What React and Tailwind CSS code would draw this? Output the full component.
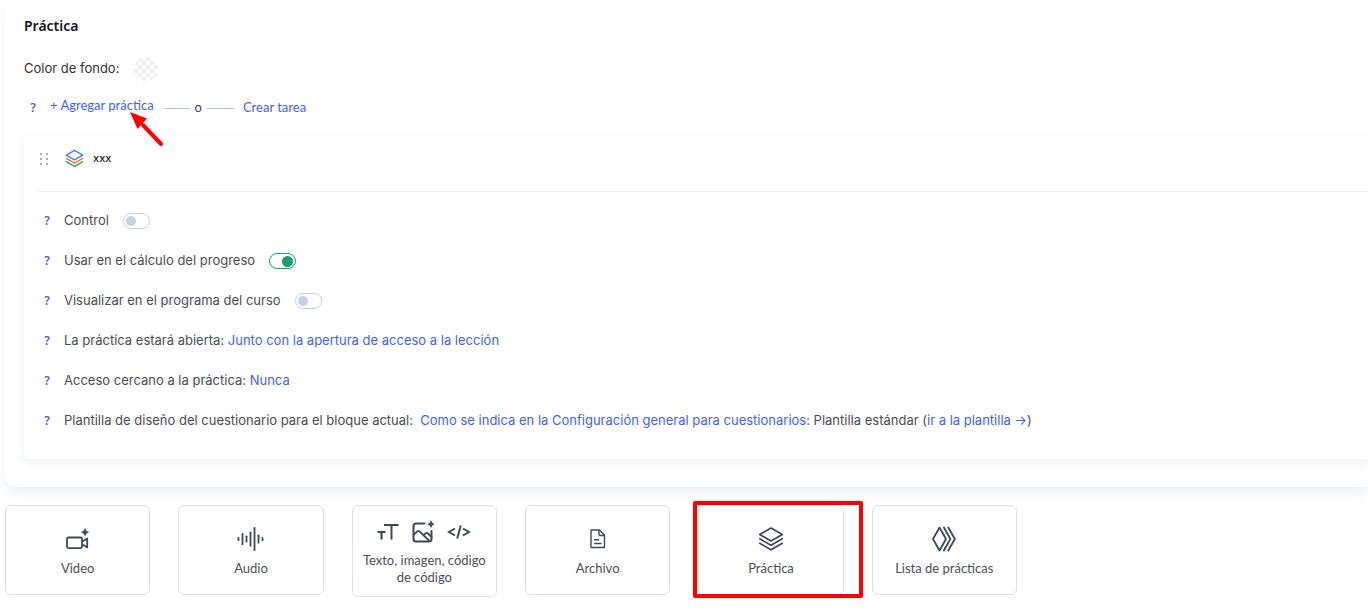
import { useState } from 'react'

const linkClass = 'text-[#3f5fff] hover:underline'

function Hint() {
    return (
        <button type="button" aria-label="Ayuda" className="w-[6px] shrink-0 font-['Noto_Sans',sans-serif] text-xs font-semibold text-[#3f63f5]">
            ?
        </button>
    )
}

function Toggle({ id, label, defaultChecked = false }) {
    const [checked, setChecked] = useState(defaultChecked)

    return (
        <div className="flex h-10 items-center">
            <Hint />
            <label htmlFor={id} className="ml-[14px]">{label}</label>
            <input
                id={id}
                type="checkbox"
                checked={checked}
                onChange={(e) => setChecked(e.target.checked)}
                className="ml-[14px] flex h-4 w-[27px] cursor-pointer appearance-none items-center rounded-full border border-[#c5d0e3] px-[2px] before:size-[10px] before:rounded-full before:bg-[#c5d0e3] checked:justify-end checked:border-[#17a06c] checked:before:size-[11px] checked:before:bg-[#17a06c]"
            />
        </div>
    )
}

function Row({ children }) {
    return (
        <div className="flex h-10 items-center">
            <Hint />
            <p className="ml-[14px] whitespace-pre">{children}</p>
        </div>
    )
}

function DragHandle() {
    return (
        <svg width="10" height="14" viewBox="0 0 10 14" fill="#a3a9b6">
            {[2, 7, 12].map((y) => (
                <g key={y}>
                    <rect x="1" y={y - 1} width="2" height="2" rx="0.5" />
                    <rect x="7" y={y - 1} width="2" height="2" rx="0.5" />
                </g>
            ))}
        </svg>
    )
}

function LayersIcon({ size = 26, top = '#3f4859', middle = '#3f4859', bottom = '#3f4859', width = 1.7 }) {
    return (
        <svg width={size} height={size} viewBox="0 0 26 26" fill="none" strokeWidth={width} strokeLinejoin="round" strokeLinecap="round">
            <path d="M13 2 L24.3 8.5 L13 15 L1.7 8.5 Z" stroke={top} />
            <path d="M1.7 12.8 L13 19.3 L24.3 12.8" stroke={middle} />
            <path d="M1.7 17.3 L13 23.8 L24.3 17.3" stroke={bottom} />
        </svg>
    )
}

function VideoIcon() {
    return (
        <svg width="26" height="26" viewBox="0 0 26 26" fill="none" stroke="#3f4859" strokeWidth="1.8" strokeLinejoin="round">
            <rect x="2" y="11.5" width="15" height="10.6" rx="1.5" />
            <path d="M17.5 15.4 L22.2 12.4 V21.4 L17.5 18.4" />
            <path d="M20 2.6 L21.3 4.9 L23.6 6.2 L21.3 7.5 L20 9.8 L18.7 7.5 L16.4 6.2 L18.7 4.9 Z" fill="#3f4859" strokeWidth="0.5" />
        </svg>
    )
}

function AudioIcon() {
    const bars = [[1.5, 4], [5.5, 12], [9.5, 7], [13.5, 15], [17.5, 24], [21.5, 9], [25.5, 4]]
    return (
        <svg width="28" height="26" viewBox="0 0 28 26" stroke="#3f4859" strokeWidth="1.8" strokeLinecap="round">
            {bars.map(([x, h]) => (
                <path key={x} d={`M${x} ${13 - h / 2 + 0.8} V${13 + h / 2 - 0.8}`} />
            ))}
        </svg>
    )
}

function TextIcon() {
    return (
        <svg width="22" height="24" viewBox="0 0 22 24" fill="none" stroke="#3f4859" strokeWidth="2">
            <path d="M7 5 H21.5 M14.5 5 V19.5" />
            <path d="M0.5 12 H8.5 M4.5 12 V19.5" strokeWidth="2.2" />
        </svg>
    )
}

function ImageIcon() {
    return (
        <svg width="24" height="24" viewBox="0 0 24 24" fill="none" stroke="#3f4859" strokeWidth="2" strokeLinecap="round" strokeLinejoin="round">
            <path d="M13.5 3.5 H5 Q2.5 3.5 2.5 6 V19 Q2.5 21.5 5 21.5 H18 Q20.5 21.5 20.5 19 V11" />
            <path d="M3 14.5 L6.5 11.2 Q7.5 10.4 8.5 11.3 L18 20.5" strokeWidth="1.8" />
            <path d="M12.5 15 L14.8 13.3 Q16 12.5 17 13.5 L20.5 17" strokeWidth="1.8" />
            <path d="M20 1 L21.1 3.1 L23.2 4.2 L21.1 5.3 L20 7.4 L18.9 5.3 L16.8 4.2 L18.9 3.1 Z" fill="#3f4859" strokeWidth="0.6" />
        </svg>
    )
}

function CodeIcon() {
    return (
        <svg width="24" height="24" viewBox="0 0 24 24" fill="none" stroke="#3f4859" strokeWidth="2">
            <path d="M8 8.5 L2 12 L8 15.5 M16 8.5 L22 12 L16 15.5 M13.8 5.5 L10.2 18.5" />
        </svg>
    )
}

function FileIcon() {
    return (
        <svg width="24" height="26" viewBox="0 0 24 26" fill="none" stroke="#3f4859" strokeWidth="1.4" strokeLinejoin="round">
            <path d="M13.5 4 H5.5 Q5 4 5 4.5 V21 Q5 21.5 5.5 21.5 H18 Q18.5 21.5 18.5 21 V9 Z" />
            <path d="M13 4 V8 Q13 9.5 14.5 9.5 H18.5 M8 13.7 H13 M8 17.5 H15.5" />
        </svg>
    )
}

function ListIcon() {
    return (
        <svg width="26" height="26" viewBox="0 0 26 26" fill="none" stroke="#3f4859" strokeWidth="1.8" strokeLinejoin="round" strokeLinecap="round">
            <path d="M8.5 1.5 L15 13 L8.5 24.5 L2 13 Z" />
            <path d="M12.9 1.5 L19.4 13 L12.9 24.5 M17.3 1.5 L23.8 13 L17.3 24.5" />
        </svg>
    )
}

const blocks = [
    { label: 'Video', icon: <VideoIcon /> },
    { label: 'Audio', icon: <AudioIcon /> },
    { label: 'Texto, imagen, código de código', icon: <><TextIcon /><ImageIcon /><CodeIcon /></>, tall: true },
    { label: 'Archivo', icon: <FileIcon /> },
    { label: 'Práctica', icon: <LayersIcon />, marked: true },
    { label: 'Lista de prácticas', icon: <ListIcon /> },
]

function BlockTile({ label, icon, tall, marked }) {
    return (
        <div className="relative">
            <button
                type="button"
                className={`flex w-full flex-col items-center rounded-md border border-[#dedeec] bg-white px-2 text-[13px] leading-[17px] text-[#4a4f58] ${tall ? 'h-[92px] pt-[14px]' : 'h-[90px] pt-5'}`}
            >
                <span className={`flex items-center justify-center ${tall ? 'mb-2 gap-3' : 'mb-2'}`}>{icon}</span>
                <span>{label}</span>
            </button>
            {marked && (
                <span className="pointer-events-none absolute -top-1 -left-[5px] h-[97px] w-[170px] rounded-xs border-4 border-[#ff0000]" />
            )}
        </div>
    )
}

export default function App() {
    return (
        <main className="overflow-hidden bg-white pb-4 pl-[5px] font-['Lato',sans-serif] text-[13px]">
            <section className="rounded-l-xl bg-white pt-4 pb-7 pl-[19px] shadow-[0_6px_14px_rgba(60,90,130,0.09)]">
                <h2 className="font-['Noto_Sans',sans-serif] text-sm leading-5 font-semibold text-[#16181c]">Práctica</h2>

                <div className="mt-[21px] flex items-center gap-[15px] font-['Inter',sans-serif] text-[13px] text-[#333333]">
                    <label htmlFor="bg-color">Color de fondo:</label>
                    <button
                        id="bg-color"
                        type="button"
                        className="size-6 rounded-full bg-[conic-gradient(#eeeeee_25%,#ffffff_0_50%,#eeeeee_0_75%,#ffffff_0)] bg-[length:8px_8px]"
                    />
                </div>

                <div className="mt-[15px] flex h-6 items-center pl-[6px]">
                    <Hint />
                    <span className="relative ml-[14px] pb-1">
                        <a href="#agregar" className={linkClass}>+ Agregar práctica</a>
                        <svg className="pointer-events-none absolute top-4 left-[80px]" width="36" height="36" viewBox="0 0 36 36">
                            <path d="M13 13 L31 32" stroke="#ff0000" strokeWidth="4" strokeLinecap="round" />
                            <path d="M0 0 L17 6.5 L7.5 17 Z" fill="#ff0000" />
                        </svg>
                    </span>
                    <span className="ml-[10px] h-px w-[26px] bg-[#b3c0d6]" />
                    <span className="mx-[5px] text-[#444444]">o</span>
                    <span className="h-px w-[27px] bg-[#b3c0d6]" />
                    <a href="#crear" className={`ml-[9px] ${linkClass}`}>Crear tarea</a>
                </div>

                <article className="mt-4 rounded-l-md bg-white pb-[18px] pl-[14px] font-['Inter',sans-serif] text-[13px] text-[#4a4d55] shadow-[0_4px_12px_rgba(60,90,130,0.09)]">
                    <header className="flex h-14 items-center border-b border-[#eef0f2] pb-[10px]">
                        <button type="button" aria-label="Mover" className="ml-px">
                            <DragHandle />
                        </button>
                        <span className="ml-4">
                            <LayersIcon size={19} top="#4b7fdb" middle="#f07142" bottom="#2fa85a" width={1.9} />
                        </span>
                        <h3 className="ml-[9px] text-[11px] font-medium text-[#1d1f24]">xxx</h3>
                    </header>

                    <div className="pt-[9px] pl-[6px]">
                        <Toggle id="control" label="Control" />
                        <Toggle id="progreso" label="Usar en el cálculo del progreso" defaultChecked />
                        <Toggle id="programa" label="Visualizar en el programa del curso" />
                        <Row>
                            La práctica estará abierta: <a href="#apertura" className={linkClass}>Junto con la apertura de acceso a la lección</a>
                        </Row>
                        <Row>
                            Acceso cercano a la práctica: <a href="#cierre" className={linkClass}>Nunca</a>
                        </Row>
                        <Row>
                            Plantilla de diseño del cuestionario para el bloque actual:{'  '}
                            <a href="#plantilla" className={linkClass}>Como se indica en la Configuración general para cuestionarios:</a>
                            {' '}Plantilla estándar (<a href="#ir" className={linkClass}>ir a la plantilla →</a>)
                        </Row>
                    </div>
                </article>
            </section>

            <nav className="mt-[18px] grid max-w-[1012px] grid-cols-6 items-start gap-7">
                {blocks.map((block) => (
                    <BlockTile key={block.label} {...block} />
                ))}
            </nav>
        </main>
    )
}
